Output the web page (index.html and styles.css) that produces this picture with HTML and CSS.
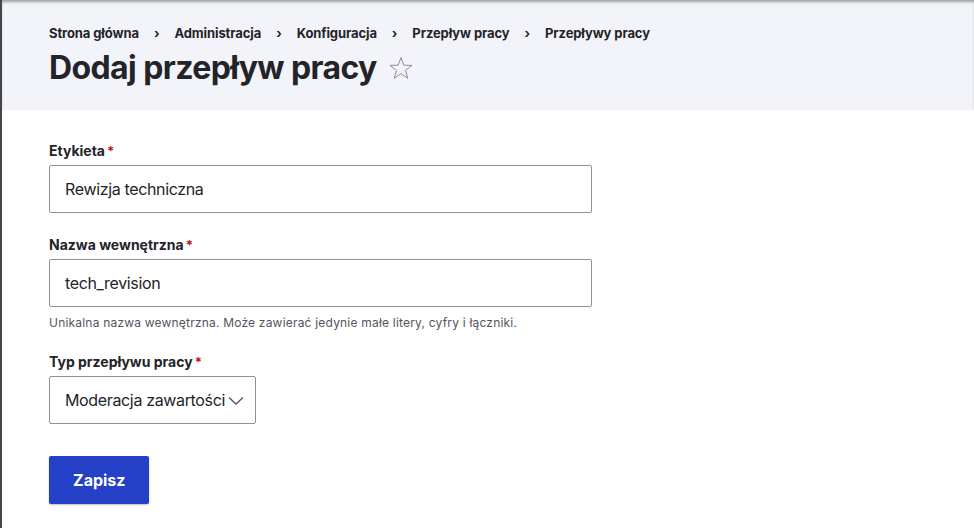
FILE: index.html
```html
<!DOCTYPE html>
<html lang="pl">
<head>
<meta charset="utf-8">
<title>Dodaj przepływ pracy</title>
<link rel="stylesheet" href="styles.css">
</head>
<body>
<div class="page">
  <header class="page-header">
    <nav class="breadcrumb">
      <a href="#">Strona główna</a><span class="sep">›</span>
      <a href="#">Administracja</a><span class="sep">›</span>
      <a href="#">Konfiguracja</a><span class="sep">›</span>
      <a href="#">Przepływ pracy</a><span class="sep">›</span>
      <a href="#">Przepływy pracy</a>
    </nav>
    <div class="title-row">
      <h1 class="title">Dodaj przepływ pracy</h1>
      <svg class="star" width="24" height="24" viewBox="0 0 24 24"><polygon points="12,1.5 14.8,9.2 23,9.4 16.5,14.4 18.8,22.3 12,17.6 5.2,22.3 7.5,14.4 1,9.4 9.2,9.2" fill="none" stroke="#8d8d93" stroke-width="1" stroke-linejoin="miter"/></svg>
    </div>
  </header>
  <main class="content">
    <form class="form">
      <div class="field">
        <label class="label">Etykieta<span class="req">*</span></label>
        <input class="input" type="text" value="Rewizja techniczna">
      </div>
      <div class="field">
        <label class="label">Nazwa wewnętrzna<span class="req">*</span></label>
        <input class="input" type="text" value="tech_revision">
        <div class="desc">Unikalna nazwa wewnętrzna. Może zawierać jedynie małe litery, cyfry i łączniki.</div>
      </div>
      <div class="field">
        <label class="label">Typ przepływu pracy<span class="req">*</span></label>
        <div class="select">
          <span class="select-text">Moderacja zawartości</span>
          <svg class="chev" width="16" height="10" viewBox="0 0 16 10"><path d="M1 1.5 L8 8 L15 1.5" fill="none" stroke="#55565e" stroke-width="1.3"/></svg>
        </div>
      </div>
      <div class="actions">
        <button class="btn" type="button">Zapisz</button>
      </div>
    </form>
  </main>
</div>
</body>
</html>
```

FILE: styles.css
```css
html, body {
  margin: 0;
  padding: 0;
  background: #fff;
}
body {
  font-family: Inter, "Noto Sans", "Liberation Sans", sans-serif;
  color: #232429;
}
.page {
  min-height: 528px;
  border-left: 2px solid #45464b;
  box-sizing: border-box;
}
.page-header {
  background: #f3f4f9;
  padding: 23px 0 22px 47px;
  box-shadow: inset 0 3px 3px -1px rgba(0,0,0,0.35);
}
.breadcrumb {
  font-size: 13px;
  font-weight: 700;
  line-height: 20px;
  display: flex;
  align-items: center;
  letter-spacing: -0.1px;
}
.breadcrumb a {
  color: #232429;
  text-decoration: none;
}
.breadcrumb .sep {
  margin: 0 15px;
  font-size: 13px;
}
.title-row {
  display: flex;
  align-items: center;
  margin-top: 5px;
  height: 40px;
}
.title {
  margin: 0;
  font-size: 32px;
  line-height: 40px;
  font-weight: 700;
  letter-spacing: -0.6px;
}
.star {
  margin-left: 12px;
}
.content {
  padding: 32px 0 0 47px;
}
.field {
  margin-bottom: 23px;
}
.label {
  display: block;
  font-size: 14px;
  font-weight: 700;
  line-height: 18px;
  margin-bottom: 5px;
}
.req {
  color: #c1111d;
  margin-left: 2px;
  font-size: 13px;
}
.input {
  display: block;
  box-sizing: border-box;
  width: 543px;
  height: 48px;
  padding: 0 15px;
  border: 1px solid #8e929c;
  border-radius: 2px;
  font-family: inherit;
  font-size: 16px;
  letter-spacing: -0.35px;
  color: #232429;
  background: #fff;
  outline: none;
}
.desc {
  font-size: 12px;
  line-height: 15px;
  color: #545560;
  margin-top: 8px;
  margin-bottom: 1px;
  letter-spacing: 0.2px;
}
.select {
  box-sizing: border-box;
  width: 207px;
  height: 48px;
  border: 1px solid #8e929c;
  border-radius: 2px;
  display: flex;
  align-items: center;
  padding-left: 15px;
  font-size: 16px;
  letter-spacing: -0.35px;
}
.chev {
  margin-left: 3px;
  margin-top: 1px;
}
.actions {
  margin-top: 32px;
}
.btn {
  box-sizing: border-box;
  height: 48px;
  padding: 0 24px;
  background: #2340c7;
  color: #fff;
  border: none;
  border-radius: 2px;
  font-family: inherit;
  font-size: 16px;
  font-weight: 700;
  box-shadow: 0 1px 2px rgba(0,0,0,0.25);
}
```
